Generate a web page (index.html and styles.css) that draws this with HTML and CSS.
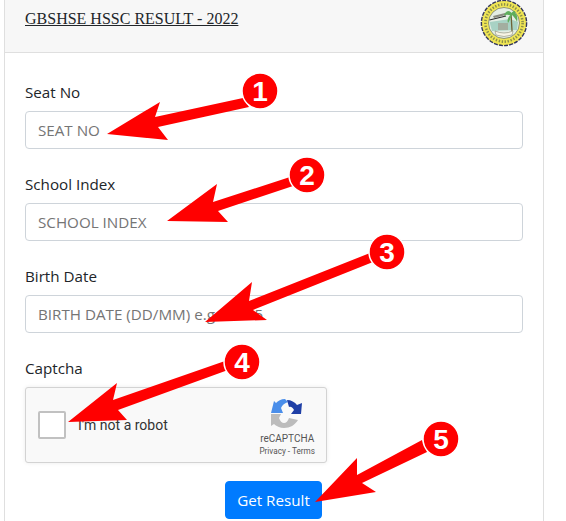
FILE: index.html
```html
<!DOCTYPE html>
<html lang="en">
<head>
    <meta charset="UTF-8">
    <title>GBSHSE HSSC Result</title>
    <link rel="stylesheet" href="styles.css">
</head>
<body>
    <div class="card">
        <div class="card-header">
            <u class="card-title">GBSHSE HSSC RESULT - 2022</u>
            <svg class="seal" width="48" height="48" viewBox="0 0 48 48">
                <circle cx="24" cy="23" r="22.6" fill="#efe554" stroke="#33365e" stroke-width="1.4" stroke-dasharray="4 1.2"/>
                <circle cx="24" cy="23" r="18.6" fill="none" stroke="#8c8f4a" stroke-width="2.6" stroke-dasharray="1.4 1.6"/>
                <circle cx="24" cy="23" r="15.5" fill="#e4eee4" stroke="#6a7058" stroke-width="0.7"/>
                <path d="M9.5 22 L30 19 L38 22 L37 30 L12 31 Z" fill="#a8d2c4"/>
                <path d="M13 16 L25 13 L26 15 L14 18 Z" fill="#8a8d80"/>
                <path d="M9.5 20 L26 16" stroke="#2e2e2e" stroke-width="1.2"/>
                <path d="M31 13 L32 31" stroke="#6d6238" stroke-width="1.3"/>
                <path d="M31.5 13 C28 9 25 12 24 16 C27 14 28 15 30 15 C28 18 27 20 28 23 C30 20 31 17 32 15 C34 17 36 19 37 22 C38 18 37 14 35 13 C36 11 34 10 31.5 13 Z" fill="#5fae5c"/>
                <rect x="18" y="23" width="10" height="7" fill="#a3aea0"/>
                <path d="M15 31 Q24 35 33 31 L32 35 Q24 38 16 35 Z" fill="#f7f5e6" stroke="#77775e" stroke-width="0.5"/>
            </svg>
        </div>
        <form class="card-body">
            <div class="form-group">
                <label class="form-label">Seat No</label>
                <input class="form-control" type="text" placeholder="SEAT NO">
            </div>
            <div class="form-group">
                <label class="form-label">School Index</label>
                <input class="form-control" type="text" placeholder="SCHOOL INDEX">
            </div>
            <div class="form-group">
                <label class="form-label">Birth Date</label>
                <input class="form-control" type="text" placeholder="BIRTH DATE (DD/MM) e.g. 01/05">
            </div>
            <div class="form-group captcha-group">
                <label class="form-label">Captcha</label>
                <div class="recaptcha">
                    <div class="recaptcha-check">
                        <span class="recaptcha-box"></span>
                        <span class="recaptcha-text">I'm not a robot</span>
                    </div>
                    <div class="recaptcha-brand">
                        <svg width="32" height="30" viewBox="0 0 32 30">
                            <path d="M3 2 L5 4 C7 2 10 0 14 0 L17 3 C14 4 11 6 10 9 L12 14 L0 14 Z" fill="#4a8eea"/>
                            <path d="M16 1 C20 1 24 3 26 6 L31 4 L30 15 L20 15 L23 11 C22 9 20 7 18 8 Z" fill="#1f3fa6"/>
                            <path d="M0 15 L10 15 L8 19 C9 22 11 24 13 24 C15 24 17 22 18 19 L27 21 C24 26 19 29 13 29 C9 29 5 27 3 25 L0 27 Z" fill="#bcbcbc"/>
                        </svg>
                        <span class="recaptcha-name">reCAPTCHA</span>
                        <span class="recaptcha-links">Privacy - Terms</span>
                    </div>
                </div>
            </div>
            <div class="form-actions">
                <button class="btn-primary" type="button">Get Result</button>
            </div>
        </form>
    </div>

    <!-- Red callouts drawn over the form -->
    <svg class="callouts" width="566" height="521" viewBox="0 0 566 521">
        <polygon points="107,134 168,140 158,127 249,107 243,98 155,117 160,102"/>
        <polygon points="167,221 228,222 218,211 293,186 290,177 213,202 217,184"/>
        <polygon points="205,322 267,320 253,310 373,262 370,253 249,301 252,282"/>
        <polygon points="68,422 127,420 118,410 228,370 225,361 113,400 117,383"/>
        <polygon points="315,502 376,492 362,483 427,452 422,440 357,475 357,458"/>
        <g class="badge"><circle cx="260" cy="91" r="18"/><text x="260" y="101">1</text></g>
        <g class="badge"><circle cx="307" cy="175" r="18"/><text x="307" y="185">2</text></g>
        <g class="badge"><circle cx="387" cy="252" r="18"/><text x="387" y="262">3</text></g>
        <g class="badge"><circle cx="242" cy="362" r="18"/><text x="242" y="372">4</text></g>
        <g class="badge"><circle cx="441" cy="439" r="18"/><text x="441" y="449">5</text></g>
    </svg>
</body>
</html>
```

FILE: styles.css
```css
* {
    box-sizing: border-box;
}

body {
    margin: 0;
    background-color: #fff;
    color: #212529;
    font-family: "Open Sans", "Liberation Sans", sans-serif;
}

.card {
    width: 540px;
    margin-left: 4px;
    border: 1px solid #dfdfdf;
    border-top: none;
}

.card-header {
    display: flex;
    justify-content: space-between;
    height: 53px;
    padding: 9px 15px 0 20px;
    background-color: #f7f7f7;
    border-bottom: 1px solid #dfdfdf;
}

.card-title {
    font-family: "Liberation Serif", serif;
    font-size: 16px;
    line-height: 20px;
    color: #212529;
}

.seal {
    margin-top: -9px;
}

.card-body {
    padding: 27px 20px 2px;
}

.form-group {
    margin-bottom: 23px;
}

.form-label {
    display: block;
    height: 24px;
    margin-bottom: 7px;
    font-size: 15.2px;
    line-height: 24px;
}

.form-control {
    display: block;
    width: 100%;
    height: 38px;
    padding: 6px 12px;
    font-family: inherit;
    font-size: 15.2px;
    border: 1px solid #ced4da;
    border-radius: 4px;
    background: #fff;
}

.form-control::placeholder {
    color: #757575;
    opacity: 1;
}

.captcha-group {
    margin-bottom: 18px;
}

.recaptcha {
    display: flex;
    justify-content: space-between;
    width: 302px;
    height: 76px;
    padding: 11px 11px 0 12px;
    background-color: #f9f9f9;
    border: 1px solid #d3d3d3;
    border-radius: 3px;
    box-shadow: 0 0 4px rgba(0, 0, 0, 0.08);
}

.recaptcha-check {
    display: flex;
    align-items: center;
    gap: 12px;
    height: 52px;
}

.recaptcha-box {
    width: 28px;
    height: 28px;
    background: #fff;
    border: 2px solid #c1c1c1;
    border-radius: 2px;
}

.recaptcha-text {
    font-family: Roboto, "Liberation Sans", sans-serif;
    font-size: 14px;
    color: #333;
}

.recaptcha-brand {
    display: flex;
    flex-direction: column;
    align-items: center;
    font-family: Roboto, "Liberation Sans", sans-serif;
    color: #555;
}

.recaptcha-name {
    margin-top: 4px;
    font-size: 10px;
    line-height: 12px;
}

.recaptcha-links {
    font-size: 8.2px;
    line-height: 12px;
}

.form-actions {
    display: flex;
    justify-content: center;
    padding-right: 1px;
}

.btn-primary {
    width: 97px;
    height: 38px;
    padding: 0;
    font-family: inherit;
    font-size: 15.2px;
    color: #fff;
    background-color: #007bff;
    border: 1px solid #007bff;
    border-radius: 4px;
}

.callouts {
    position: absolute;
    top: 0;
    left: 0;
}

.callouts polygon {
    fill: #f00;
}

.badge circle {
    fill: #f00;
    stroke: #fff;
    stroke-width: 1.5;
}

.badge text {
    fill: #fff;
    font-family: "Liberation Sans", sans-serif;
    font-size: 28px;
    font-weight: 700;
    text-anchor: middle;
}
```
